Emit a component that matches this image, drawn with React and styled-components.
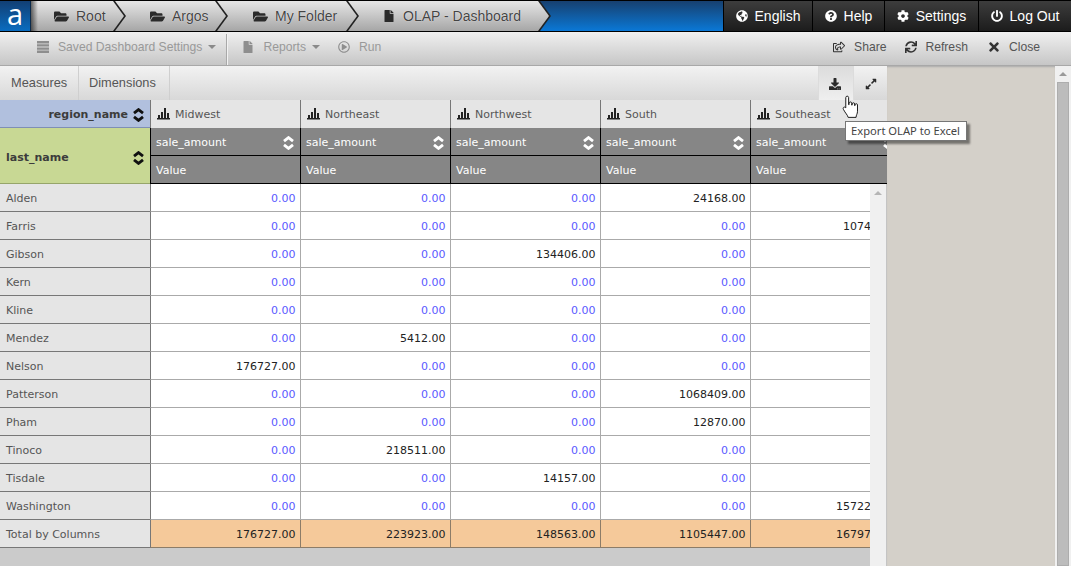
import React from "react";
import styled, { createGlobalStyle } from "styled-components";
import {
  FaFolderOpen,
  FaFile,
  FaGlobeAmericas,
  FaQuestionCircle,
  FaCog,
  FaPowerOff,
  FaRegShareSquare,
  FaSync,
  FaTimes,
  FaDownload,
  FaExpandAlt,
  FaRegPlayCircle,
} from "react-icons/fa";

const GlobalStyle = createGlobalStyle`
  html, body {
    margin: 0;
    height: 100%;
    overflow: hidden;
    background: #d4d0c9;
    font-family: "Liberation Sans", Arial, sans-serif;
  }
  #root { height: 100%; }
`;

const Page = styled.div`
  display: flex;
  flex-direction: column;
  height: 566px;
  width: 1071px;
  position: relative;
  overflow: hidden;
`;

const TopBar = styled.div`
  display: flex;
  flex: none;
  height: 32px;
  box-sizing: border-box;
  border-top: 1px solid #000;
  border-bottom: 1px solid #000;
  background: linear-gradient(#17406f, #0a78d6);
`;

const Logo = styled.div`
  flex: none;
  width: 31px;
  box-sizing: border-box;
  border-right: 1px solid #0b2a4a;
  background: linear-gradient(#123f74, #0a6cc0);
  color: #fff;
  font-family: "Open Sans", sans-serif;
  font-size: 29px;
  line-height: 26px;
  text-align: center;
`;

const Crumbs = styled.div`
  display: flex;
  flex: 1;
`;

const Crumb = styled.div`
  position: relative;
  flex: none;
  display: flex;
  align-items: center;
  box-sizing: border-box;
  width: ${({ $width }) => $width}px;
  padding-left: ${({ $pad }) => $pad}px;
  margin-left: ${({ $first }) => ($first ? 0 : -12)}px;
  z-index: ${({ $level }) => $level};
  color: #444;
  font-size: 14px;
  text-shadow: 0 0 1px #fff;
  background: #222;
  clip-path: polygon(0 0, calc(100% - 11px) 0, 100% 50%, calc(100% - 11px) 100%, 0 100%);

  &::before {
    content: "";
    position: absolute;
    inset: 0 2px 0 0;
    background: ${({ $first }) =>
      $first
        ? "linear-gradient(to right, rgba(0,0,0,.55), transparent 7px), linear-gradient(#e6e6e6, #a6a6a6)"
        : "linear-gradient(#e6e6e6, #a6a6a6)"};
    clip-path: polygon(0 0, calc(100% - 11px) 0, 100% 50%, calc(100% - 11px) 100%, 0 100%);
  }

  svg {
    position: relative;
    flex: none;
    color: #2b2b2b;
    font-size: ${({ $iconSize }) => $iconSize || 15}px;
    margin-right: ${({ $iconGap }) => $iconGap || 7}px;
  }

  span {
    position: relative;
  }
`;

const NavButtons = styled.div`
  display: flex;
  flex: none;
  margin-left: auto;
`;

const NavButton = styled.div`
  display: flex;
  align-items: center;
  justify-content: center;
  gap: 7px;
  box-sizing: border-box;
  width: ${({ $width }) => $width}px;
  border-left: 1px solid #000;
  background: linear-gradient(#3d3d3d, #1c1c1c);
  color: #fff;
  font-size: 14px;

  svg {
    font-size: 12px;
  }
`;

const Toolbar = styled.div`
  display: flex;
  flex: none;
  align-items: center;
  height: 34px;
  box-sizing: border-box;
  padding: 0 31px 4px 37px;
  border-bottom: 1px solid #a8a8a8;
  background: linear-gradient(#f0f0f0, #c6c6c6);
  font-size: 12.15px;
`;

const ToolItem = styled.div`
  display: flex;
  align-items: center;
  gap: ${({ $gap }) => $gap || 9}px;
  margin-left: ${({ $left }) => $left || 0}px;
  color: ${({ $active }) => ($active ? "#555" : "#999")};

  svg {
    font-size: ${({ $iconSize }) => $iconSize || 12}px;
    color: ${({ $active }) => ($active ? "#333" : "#8e8e8e")};
  }
`;

const Caret = styled.i`
  width: 0;
  height: 0;
  margin-left: -3px;
  border-left: 4px solid transparent;
  border-right: 4px solid transparent;
  border-top: 4px solid #8a8a8a;
`;

const ToolDivider = styled.div`
  align-self: stretch;
  width: 1px;
  margin: 2px 0 -4px 10px;
  background: #a9a9a9;
  box-shadow: 1px 0 0 #f2f2f2;
`;

const ToolSpacer = styled.div`
  flex: 1;
`;

const Main = styled.div`
  display: flex;
  flex: 1;
  min-height: 0;
`;

const Panel = styled.div`
  display: flex;
  flex-direction: column;
  flex: none;
  width: 887px;
`;

const TabBar = styled.div`
  display: flex;
  flex: none;
  height: 34px;
  background: linear-gradient(#f2f2f2, #d8d8d8);
  font-size: 12.8px;
  color: #555;
`;

const Tab = styled.div`
  display: flex;
  align-items: center;
  box-sizing: border-box;
  width: ${({ $width }) => $width}px;
  padding: 0 0 2px ${({ $pad }) => $pad}px;
  border-right: 1px solid #cfcfcf;
`;

const TabSpacer = styled.div`
  flex: 1;
`;

const IconTab = styled.div`
  display: flex;
  align-items: center;
  justify-content: center;
  box-sizing: border-box;
  width: ${({ $width }) => $width}px;
  padding: 2px ${({ $hover }) => ($hover ? 3 : 0)}px 0 0;
  border-left: 1px solid #dcdcdc;
  color: #2b2b2b;
  font-size: 12px;
  background: ${({ $hover }) => ($hover ? "linear-gradient(#dcdcdc, #efefef)" : "transparent")};
`;

const HeaderGrid = styled.div`
  display: grid;
  flex: none;
  width: 887px;
  height: 84px;
  overflow: hidden;
  grid-template-columns: 150px repeat(5, 150px);
  grid-template-rows: repeat(3, 28px);
  font-family: "DejaVu Sans", Verdana, sans-serif;
  font-size: 11px;
`;

const CornerCell = styled.div`
  display: flex;
  align-items: center;
  justify-content: ${({ $end }) => ($end ? "flex-end" : "space-between")};
  gap: 4px;
  box-sizing: border-box;
  padding: ${({ $span }) => ($span ? "4px 5px 0 6px" : "2px 5px 0")};
  color: #3c3c3c;
  font-weight: bold;
  background: ${({ $bg }) => $bg};
  border-bottom: 1px solid ${({ $line }) => $line};
  grid-row: ${({ $span }) => ($span ? "span 2" : "auto")};
`;

const RegionCell = styled.div`
  display: flex;
  align-items: center;
  gap: 5px;
  box-sizing: border-box;
  padding-left: 6px;
  background: #e5e5e5;
  border-left: 1px solid #777;
  color: #555;
`;

const DarkCell = styled.div`
  display: flex;
  align-items: center;
  justify-content: space-between;
  box-sizing: border-box;
  padding: 2px 5px 0;
  background: #868686;
  color: #fff;
  border-left: 1px solid #000;
  border-bottom: 1px solid #000;
`;

const BodyArea = styled.div`
  display: flex;
  flex: 1;
  min-height: 0;
`;

const Rows = styled.div`
  flex: none;
  width: 870px;
  overflow: hidden;
  background: #cbcbcb;
  font-family: "DejaVu Sans", Verdana, sans-serif;
  font-size: 11px;
`;

const Row = styled.div`
  display: flex;
  width: 900px;
  height: 28px;
`;

const NameCell = styled.div`
  flex: none;
  width: 150px;
  box-sizing: border-box;
  padding-left: 6px;
  line-height: 29px;
  color: #555;
  background: #e5e5e5;
  border-bottom: 1px solid #777;
`;

const ValueCell = styled.div`
  flex: none;
  width: 150px;
  box-sizing: border-box;
  padding-right: 4.6px;
  line-height: 29px;
  text-align: right;
  color: ${({ $zero }) => ($zero ? "#5a5aff" : "#222")};
  background: ${({ $total }) => ($total ? "#f5c99a" : "#fff")};
  border-left: 1px solid ${({ $total, $first }) => ($first ? "#777" : $total ? "#8c7c68" : "#aaa")};
  border-bottom: 1px solid ${({ $total }) => ($total ? "#8c7c68" : "#aaa")};
`;

const InnerScroll = styled.div`
  flex: none;
  width: 17px;
  box-sizing: border-box;
  padding-top: 7px;
  display: flex;
  justify-content: center;
  background: #f0f0f0;
  border-right: 1px solid #c4c4c4;
`;

const UpArrow = styled.i`
  width: 0;
  height: 0;
  border-left: 4px solid transparent;
  border-right: 4px solid transparent;
  border-bottom: 4px solid ${({ $color }) => $color};
`;

const SidePane = styled.div`
  flex: 1;
  background: #d4d0c9;
  box-shadow: inset 0 2px 2px -1px #aaa;
`;

const PageScroll = styled.div`
  display: flex;
  flex-direction: column;
  align-items: center;
  flex: none;
  width: 16px;
  padding-top: 6px;
  gap: 6px;
  box-sizing: border-box;
  background: #f0f0f0;
`;

const PageThumb = styled.div`
  flex: 1;
  width: 12px;
  box-sizing: border-box;
  background: #bcbcbc;
  border: 1px solid #adadad;
`;

const Tooltip = styled.div`
  position: absolute;
  left: 845px;
  top: 121px;
  box-sizing: border-box;
  width: 122px;
  height: 20px;
  padding-left: 5px;
  background: #fff;
  border: 1px solid #767676;
  box-shadow: 3px 3px 2px rgba(0, 0, 0, 0.45);
  color: #444;
  font-family: "Noto Sans", Tahoma, sans-serif;
  font-size: 11.2px;
  line-height: 18px;
  white-space: nowrap;
`;

const Cursor = styled.svg`
  position: absolute;
  left: 842px;
  top: 95px;
  width: 17px;
  height: 24px;
`;

const SortIcon = ({ color = "#111" }) => (
  <svg width="13" height="14" viewBox="0 0 13 14" fill="none" style={{ flex: "none" }}>
    <path d="M2 5.2 6.5 1.6 11 5.2M2 8.8l4.5 3.6L11 8.8" stroke={color} strokeWidth="2.8" />
  </svg>
);

const BarsIcon = () => (
  <svg width="13" height="12" viewBox="0 0 13 12" fill="#222" style={{ flex: "none" }}>
    <path d="M0 10h13v1.5H0zM1 7h2v3H1zM4 4h2v6H4zM7 0h2v10H7zM10 5h2v5h-2z" />
  </svg>
);

const ListIcon = () => (
  <svg width="12" height="12" viewBox="0 0 12 12" fill="#8e8e8e">
    <path d="M0 0h12v2.4H0zM0 3.2h12v2.4H0zM0 6.4h12v2.4H0zM0 9.6h12V12H0z" />
  </svg>
);

const crumbs = [
  { label: "Root", width: 95, pad: 23 },
  { label: "Argos", width: 114, pad: 36 },
  { label: "My Folder", width: 143, pad: 37 },
  { label: "OLAP - Dashboard", width: 204, pad: 36, file: true },
];

const regions = ["Midwest", "Northeast", "Northwest", "South", "Southeast"];

const rows = [
  ["Alden", { 3: "24168.00" }],
  ["Farris", { 4: "10744.00" }],
  ["Gibson", { 2: "134406.00" }],
  ["Kern", {}],
  ["Kline", {}],
  ["Mendez", { 1: "5412.00" }],
  ["Nelson", { 0: "176727.00" }],
  ["Patterson", { 3: "1068409.00" }],
  ["Pham", { 3: "12870.00" }],
  ["Tinoco", { 1: "218511.00" }],
  ["Tisdale", { 2: "14157.00" }],
  ["Washington", { 4: "157225.00" }],
];

const totals = ["176727.00", "223923.00", "148563.00", "1105447.00", "167970.00"];

export default function App() {
  return (
    <Page>
      <GlobalStyle />
      <TopBar>
        <Logo>a</Logo>
        <Crumbs>
          {crumbs.map((c, i) => (
            <Crumb
              key={c.label}
              $first={i === 0}
              $level={10 - i}
              $width={c.width}
              $pad={c.pad}
              $iconSize={c.file ? 12 : 15}
              $iconGap={c.file ? 8 : 7}
            >
              {c.file ? <FaFile /> : <FaFolderOpen />}
              <span>{c.label}</span>
            </Crumb>
          ))}
        </Crumbs>
        <NavButtons>
          <NavButton $width={89}>
            <FaGlobeAmericas /> English
          </NavButton>
          <NavButton $width={72}>
            <FaQuestionCircle /> Help
          </NavButton>
          <NavButton $width={94}>
            <FaCog /> Settings
          </NavButton>
          <NavButton $width={93}>
            <FaPowerOff /> Log Out
          </NavButton>
        </NavButtons>
      </TopBar>

      <Toolbar>
        <ToolItem>
          <ListIcon /> Saved Dashboard Settings <Caret />
        </ToolItem>
        <ToolDivider />
        <ToolItem $left={15} $gap={9}>
          <FaFile /> Reports <Caret />
        </ToolItem>
        <ToolItem $left={18}>
          <FaRegPlayCircle /> Run
        </ToolItem>
        <ToolSpacer />
        <ToolItem $active $gap={9}>
          <FaRegShareSquare /> Share
        </ToolItem>
        <ToolItem $active $left={19} $gap={8}>
          <FaSync /> Refresh
        </ToolItem>
        <ToolItem $active $left={19} $gap={8} $iconSize={14}>
          <FaTimes /> Close
        </ToolItem>
      </Toolbar>

      <Main>
        <Panel>
          <TabBar>
            <Tab $width={79} $pad={11}>Measures</Tab>
            <Tab $width={91} $pad={10}>Dimensions</Tab>
            <TabSpacer />
            <IconTab $width={35} $hover>
              <FaDownload />
            </IconTab>
            <IconTab $width={34}>
              <FaExpandAlt />
            </IconTab>
          </TabBar>

          <HeaderGrid>
            <CornerCell $end $bg="#b1c0de" $line="#7f8fb5">
              region_name <SortIcon />
            </CornerCell>
            {regions.map((r) => (
              <RegionCell key={r}>
                <BarsIcon /> {r}
              </RegionCell>
            ))}
            <CornerCell $span $bg="#c8d894" $line="#96a56a">
              last_name <SortIcon />
            </CornerCell>
            {regions.map((r) => (
              <DarkCell key={r}>
                sale_amount <SortIcon color="#fff" />
              </DarkCell>
            ))}
            {regions.map((r) => (
              <DarkCell key={r}>Value</DarkCell>
            ))}
          </HeaderGrid>

          <BodyArea>
            <Rows>
              {rows.map(([name, values]) => (
                <Row key={name}>
                  <NameCell>{name}</NameCell>
                  {regions.map((r, i) => (
                    <ValueCell key={r} $first={i === 0} $zero={!values[i]}>
                      {values[i] || "0.00"}
                    </ValueCell>
                  ))}
                </Row>
              ))}
              <Row>
                <NameCell>Total by Columns</NameCell>
                {totals.map((t, i) => (
                  <ValueCell key={regions[i]} $first={i === 0} $total>
                    {t}
                  </ValueCell>
                ))}
              </Row>
            </Rows>
            <InnerScroll>
              <UpArrow $color="#b5b5b5" />
            </InnerScroll>
          </BodyArea>
        </Panel>
        <SidePane />
        <PageScroll>
          <UpArrow $color="#9a9a9a" />
          <PageThumb />
        </PageScroll>
      </Main>

      <Tooltip>Export OLAP to Excel</Tooltip>
      <Cursor viewBox="0 0 18 25">
        <path
          d="M4 2.5c0-2 3-2 3 0V10h.5V8.5c0-1.8 2.8-1.8 2.8 0V10.5h.4V9.3c0-1.7 2.7-1.7 2.7 0v1.7h.4v-.8c0-1.6 2.6-1.6 2.6 0V17c0 3-1.5 4-1.5 6.5H6.5C6 21 3.5 19 1.5 15c-1-2 1-3.3 2.5-1.6z"
          fill="#fff"
          stroke="#111"
          strokeWidth="1"
        />
      </Cursor>
    </Page>
  );
}
